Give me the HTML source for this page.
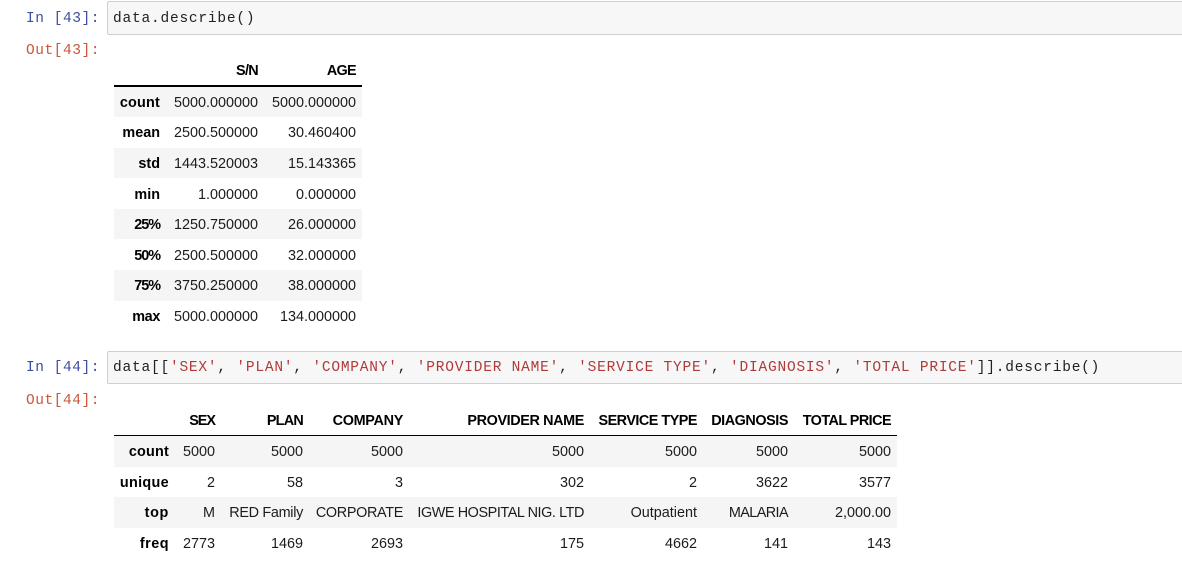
<!DOCTYPE html>
<html><head><meta charset="utf-8">
<style>
html,body{margin:0;padding:0;background:#fff;width:1182px;height:566px;overflow:hidden}
body{position:relative;font-family:"Liberation Sans",Arial,sans-serif;font-size:14.4px;color:#1c1c1c}
.box{position:absolute;left:107px;width:1080px;background:#f7f7f7;border:1px solid #cfcfcf;border-radius:2px;box-sizing:border-box}
.m{position:absolute;font-family:"Liberation Mono",monospace;font-size:14.5px;letter-spacing:.79px;line-height:18px;white-space:pre;color:#222}
.in{color:#3f4d9f;left:26px;letter-spacing:.55px}.out{color:#c8573a;left:26px;letter-spacing:.55px}
.s{color:#b03a3a}
.bg{position:absolute;background:#f5f5f5}
.rule{position:absolute;background:#000}
.t{position:absolute;line-height:18px;white-space:nowrap;transform:translateX(-100%)}
.b{font-weight:bold;color:#000}
</style></head><body>
<div class="box" style="top:1px;height:34px"></div>
<div class="m in" style="top:10px">In [43]:</div>
<div class="m" style="left:113px;top:10px">data.describe()</div>
<div class="m out" style="top:42px">Out[43]:</div>

<div class="rule" style="left:114px;top:85px;width:248px;height:2px"></div>
<div class="bg" style="left:114px;top:87px;width:248px;height:30px"></div>
<div class="bg" style="left:114px;top:148px;width:248px;height:30px"></div>
<div class="bg" style="left:114px;top:209px;width:248px;height:30px"></div>
<div class="bg" style="left:114px;top:270px;width:248px;height:31px"></div>

<div class="t b" style="left:258px;top:62px;letter-spacing:-.67px">S/N</div><div class="t b" style="left:356px;top:62px;letter-spacing:-.67px">AGE</div>
<div class="t b" style="left:160px;top:94px;letter-spacing:.2px">count</div><div class="t" style="left:258px;top:94px">5000.000000</div><div class="t" style="left:356px;top:94px">5000.000000</div>
<div class="t b" style="left:160px;top:124px">mean</div><div class="t" style="left:258px;top:124px">2500.500000</div><div class="t" style="left:356px;top:124px">30.460400</div>
<div class="t b" style="left:160px;top:155px">std</div><div class="t" style="left:258px;top:155px">1443.520003</div><div class="t" style="left:356px;top:155px">15.143365</div>
<div class="t b" style="left:160px;top:186px">min</div><div class="t" style="left:258px;top:186px">1.000000</div><div class="t" style="left:356px;top:186px">0.000000</div>
<div class="t b" style="left:160px;top:216px;letter-spacing:-1px">25%</div><div class="t" style="left:258px;top:216px">1250.750000</div><div class="t" style="left:356px;top:216px">26.000000</div>
<div class="t b" style="left:160px;top:247px;letter-spacing:-1px">50%</div><div class="t" style="left:258px;top:247px">2500.500000</div><div class="t" style="left:356px;top:247px">32.000000</div>
<div class="t b" style="left:160px;top:277px;letter-spacing:-1px">75%</div><div class="t" style="left:258px;top:277px">3750.250000</div><div class="t" style="left:356px;top:277px">38.000000</div>
<div class="t b" style="left:160px;top:308px;letter-spacing:-.33px">max</div><div class="t" style="left:258px;top:308px">5000.000000</div><div class="t" style="left:356px;top:308px">134.000000</div>

<div class="box" style="top:351px;height:33px"></div>
<div class="m in" style="top:359px">In [44]:</div>
<div class="m" style="left:113px;top:359px">data[[<span class="s">'SEX'</span>, <span class="s">'PLAN'</span>, <span class="s">'COMPANY'</span>, <span class="s">'PROVIDER NAME'</span>, <span class="s">'SERVICE TYPE'</span>, <span class="s">'DIAGNOSIS'</span>, <span class="s">'TOTAL PRICE'</span>]].describe()</div>
<div class="m out" style="top:392px">Out[44]:</div>

<div class="rule" style="left:114px;top:435px;width:783px;height:1px"></div>
<div class="bg" style="left:114px;top:436px;width:783px;height:31px"></div>
<div class="bg" style="left:114px;top:497px;width:783px;height:31px"></div>

<div class="t b" style="left:215px;top:412px;letter-spacing:-1px">SEX</div><div class="t b" style="left:303px;top:412px;letter-spacing:-.75px">PLAN</div><div class="t b" style="left:403px;top:412px;letter-spacing:-.3px">COMPANY</div><div class="t b" style="left:584px;top:412px;letter-spacing:-.38px">PROVIDER NAME</div><div class="t b" style="left:697px;top:412px;letter-spacing:-.5px">SERVICE TYPE</div><div class="t b" style="left:788px;top:412px;letter-spacing:-.44px">DIAGNOSIS</div><div class="t b" style="left:891px;top:412px;letter-spacing:-.55px">TOTAL PRICE</div>

<div class="t b" style="left:169px;top:443px;letter-spacing:.2px">count</div><div class="t" style="left:215px;top:443px">5000</div><div class="t" style="left:303px;top:443px">5000</div><div class="t" style="left:403px;top:443px">5000</div><div class="t" style="left:584px;top:443px">5000</div><div class="t" style="left:697px;top:443px">5000</div><div class="t" style="left:788px;top:443px">5000</div><div class="t" style="left:891px;top:443px">5000</div>

<div class="t b" style="left:169px;top:474px;letter-spacing:.33px">unique</div><div class="t" style="left:215px;top:474px">2</div><div class="t" style="left:303px;top:474px">58</div><div class="t" style="left:403px;top:474px">3</div><div class="t" style="left:584px;top:474px">302</div><div class="t" style="left:697px;top:474px">2</div><div class="t" style="left:788px;top:474px">3622</div><div class="t" style="left:891px;top:474px">3577</div>

<div class="t b" style="left:169px;top:504px;letter-spacing:.67px">top</div><div class="t" style="left:215px;top:504px">M</div><div class="t" style="left:303px;top:504px;letter-spacing:-.3px">RED Family</div><div class="t" style="left:403px;top:504px;letter-spacing:-.33px">CORPORATE</div><div class="t" style="left:584px;top:504px;letter-spacing:-.41px">IGWE HOSPITAL NIG. LTD</div><div class="t" style="left:697px;top:504px">Outpatient</div><div class="t" style="left:788px;top:504px;letter-spacing:-.57px">MALARIA</div><div class="t" style="left:891px;top:504px">2,000.00</div>

<div class="t b" style="left:169px;top:535px;letter-spacing:.5px">freq</div><div class="t" style="left:215px;top:535px">2773</div><div class="t" style="left:303px;top:535px">1469</div><div class="t" style="left:403px;top:535px">2693</div><div class="t" style="left:584px;top:535px">175</div><div class="t" style="left:697px;top:535px">4662</div><div class="t" style="left:788px;top:535px">141</div><div class="t" style="left:891px;top:535px">143</div>
</body></html>
